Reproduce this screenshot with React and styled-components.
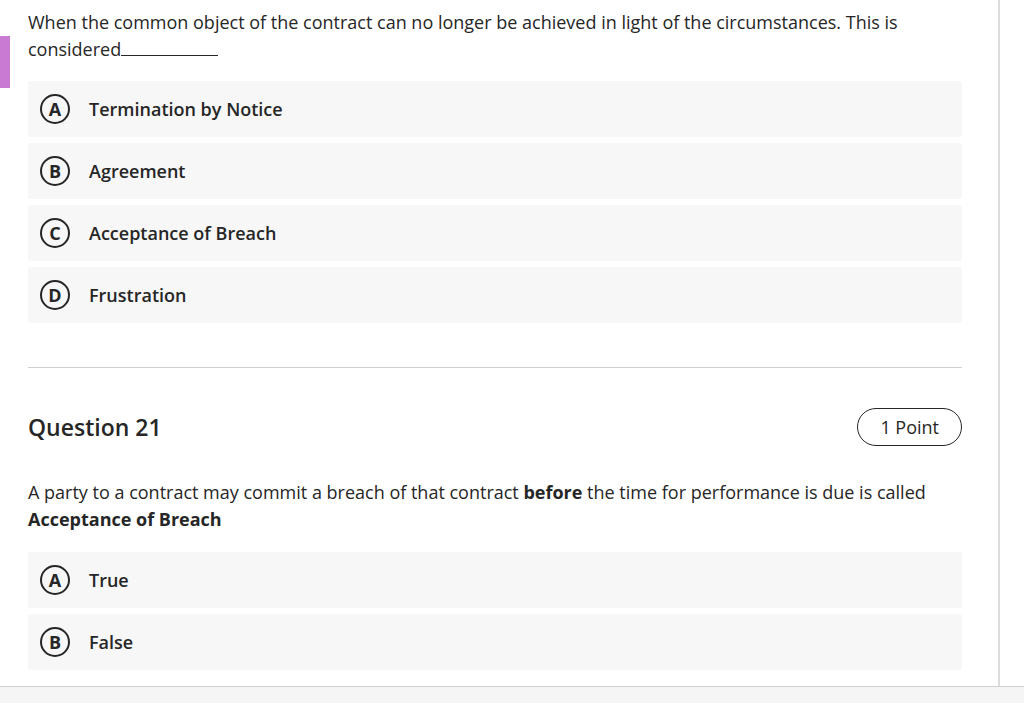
import React from 'react';
import styled, { createGlobalStyle } from 'styled-components';

const GlobalStyle = createGlobalStyle`
    html, body {
        margin: 0;
        padding: 0;
        background: #ffffff;
        font-family: "Open Sans", "Noto Sans", sans-serif;
        color: #262626;
    }
`;

const Page = styled.div`
    display: flex;
    flex-direction: column;
    height: 703px;
    overflow: hidden;
    position: relative;
`;

const Main = styled.div`
    flex: 1;
    width: 1000px;
    border-right: 2px solid #dcdcdc;
    box-sizing: border-box;
    padding: 9px 36px 0 28px;
    overflow: hidden;
`;

const Marker = styled.div`
    position: absolute;
    left: 0;
    top: 36px;
    width: 10px;
    height: 52px;
    background: #c97ad3;
`;

const Prompt = styled.p`
    margin: 0;
    font-size: 18px;
    line-height: 27px;
    color: #262626;
`;

const Blank = styled.span`
    display: inline-block;
    width: 97px;
    border-bottom: 1px solid #262626;
    height: 18px;
    vertical-align: baseline;
`;

const Options = styled.div`
    display: flex;
    flex-direction: column;
    gap: 6px;
    margin-top: ${props => props.$top}px;
`;

const Option = styled.div`
    display: flex;
    align-items: center;
    gap: 19px;
    height: 56px;
    padding-left: 12px;
    background: #f7f7f7;
    border-radius: 3px;
`;

const Letter = styled.div`
    flex: none;
    box-sizing: border-box;
    width: 30px;
    height: 30px;
    border: 2px solid #262626;
    border-radius: 50%;
    display: flex;
    align-items: center;
    justify-content: center;
    font-size: 18px;
    font-weight: 700;
    line-height: 18px;
    color: #262626;
`;

const Label = styled.span`
    font-size: 18px;
    font-weight: 600;
    color: #262626;
`;

const Divider = styled.hr`
    border: none;
    border-top: 1px solid #cfcfcf;
    margin: 44px 0 0 0;
`;

const QuestionHead = styled.div`
    display: flex;
    align-items: center;
    justify-content: space-between;
    margin-top: 40px;
`;

const QuestionTitle = styled.h2`
    margin: 0;
    font-size: 23px;
    font-weight: 600;
    color: #262626;
`;

const Points = styled.span`
    box-sizing: border-box;
    border: 1px solid #262626;
    border-radius: 19px;
    padding: 0 22px;
    height: 38px;
    display: flex;
    align-items: center;
    font-size: 18px;
    color: #262626;
`;

const SecondPrompt = styled(Prompt)`
    margin-top: 33px;
`;

const Footer = styled.div`
    height: 16px;
    border-top: 1px solid #d0d0d0;
    background: #f5f5f5;
`;

const OptionList = ({ items, top }) => (
    <Options $top={top}>
        {items.map(item => (
            <Option key={item.letter}>
                <Letter>{item.letter}</Letter>
                <Label>{item.text}</Label>
            </Option>
        ))}
    </Options>
);

const App = () => {
    return (
        <Page>
            <GlobalStyle />
            <Marker />
            <Main>
                <Prompt>
                    When the common object of the contract can no longer be achieved in light of the circumstances. This is considered<Blank />
                </Prompt>

                <OptionList
                    top={18}
                    items={[
                        { letter: 'A', text: 'Termination by Notice' },
                        { letter: 'B', text: 'Agreement' },
                        { letter: 'C', text: 'Acceptance of Breach' },
                        { letter: 'D', text: 'Frustration' },
                    ]}
                />

                <Divider />

                <QuestionHead>
                    <QuestionTitle>Question 21</QuestionTitle>
                    <Points>1 Point</Points>
                </QuestionHead>

                <SecondPrompt>
                    A party to a contract may commit a breach of that contract <strong>before</strong> the time for performance is due is called <strong>Acceptance of Breach</strong>
                </SecondPrompt>

                <OptionList
                    top={19}
                    items={[
                        { letter: 'A', text: 'True' },
                        { letter: 'B', text: 'False' },
                    ]}
                />
            </Main>
            <Footer />
        </Page>
    );
};

export default App;
